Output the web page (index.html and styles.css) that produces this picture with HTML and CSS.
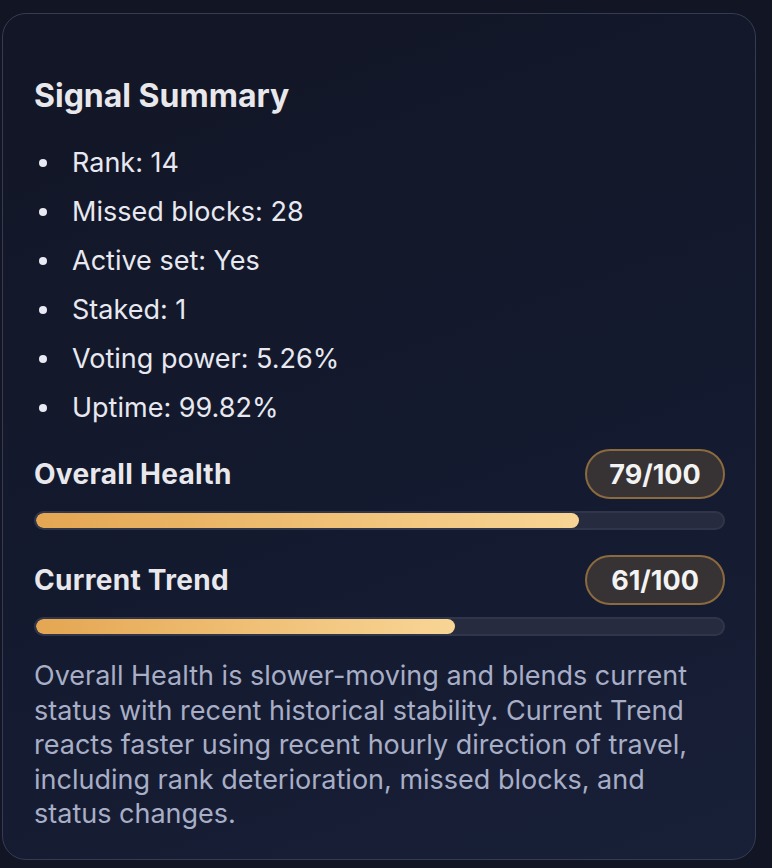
FILE: index.html
```html
<!DOCTYPE html>
<html lang="en">
<head>
<meta charset="utf-8">
<title>Signal Summary</title>
<link rel="stylesheet" href="styles.css">
</head>
<body>
<div class="page">
  <section class="card">
    <h2 class="title">Signal Summary</h2>
    <ul class="facts">
      <li>Rank: 14</li>
      <li>Missed blocks: 28</li>
      <li>Active set: Yes</li>
      <li>Staked: 1</li>
      <li>Voting power: 5.26%</li>
      <li>Uptime: 99.82%</li>
    </ul>
    <div class="metric">
      <div class="metric-head">
        <span class="metric-label">Overall Health</span>
        <span class="pill">79/100</span>
      </div>
      <div class="track"><div class="fill" style="width: 79%"></div></div>
    </div>
    <div class="metric">
      <div class="metric-head">
        <span class="metric-label">Current Trend</span>
        <span class="pill">61/100</span>
      </div>
      <div class="track"><div class="fill" style="width: 61%"></div></div>
    </div>
    <p class="note">Overall Health is slower-moving and blends current status with recent historical stability. Current Trend reacts faster using recent hourly direction of travel, including rank deterioration, missed blocks, and status changes.</p>
  </section>
</div>
</body>
</html>
```

FILE: styles.css
```css
html, body {
  margin: 0;
  padding: 0;
  background: #121624;
}
body {
  font-family: Inter, "Noto Sans", "Liberation Sans", sans-serif;
  color: #e9e9ee;
}
.page {
  padding: 13px 16px 8px 2px;
}
.card {
  box-sizing: border-box;
  height: 847px;
  border: 1.5px solid #363b52;
  border-radius: 24px;
  background: linear-gradient(160deg, #121626 0%, #141a2f 60%, #182038 100%);
  padding: 64px 30px 30px 31px;
}
.title {
  margin: 0;
  font-size: 32px;
  font-weight: 700;
  line-height: 36px;
  color: #e8e8ec;
  letter-spacing: 0;
}
.facts {
  margin: 24px 0 0;
  padding: 0;
  list-style: none;
  font-size: 27px;
  line-height: 49px;
  color: #e8e9f0;
}
.facts li {
  display: flex;
  align-items: center;
}
.facts li::before {
  content: "";
  width: 8px;
  height: 8px;
  border-radius: 50%;
  background: #e8e9f3;
  margin: 0 25px 0 5px;
  flex: none;
}
.metric-head {
  display: flex;
  justify-content: space-between;
  align-items: center;
  height: 50px;
}
.facts + .metric {
  margin-top: 17px;
}
.metric + .metric {
  margin-top: 25px;
}
.metric-label {
  font-size: 28px;
  font-weight: 700;
  color: #e8e8ec;
  letter-spacing: 0.3px;
}
.pill {
  box-sizing: border-box;
  height: 50px;
  width: 140px;
  display: inline-flex;
  align-items: center;
  justify-content: center;
  border: 2px solid #8b6a3f;
  border-radius: 25px;
  background: #373233;
  font-size: 27px;
  font-weight: 700;
  color: #f3f3f3;
}
.track {
  box-sizing: border-box;
  margin-top: 12px;
  height: 19px;
  border: 2px solid #30354a;
  border-radius: 10px;
  background: #262b40;
  overflow: hidden;
}
.fill {
  height: 100%;
  border-radius: 8px;
  background: linear-gradient(90deg, #e4a652 0%, #efbf74 50%, #f8d595 100%);
}
.note {
  margin: 23px 0 0;
  font-size: 27px;
  line-height: 34.5px;
  color: #a8aec6;
}
```
